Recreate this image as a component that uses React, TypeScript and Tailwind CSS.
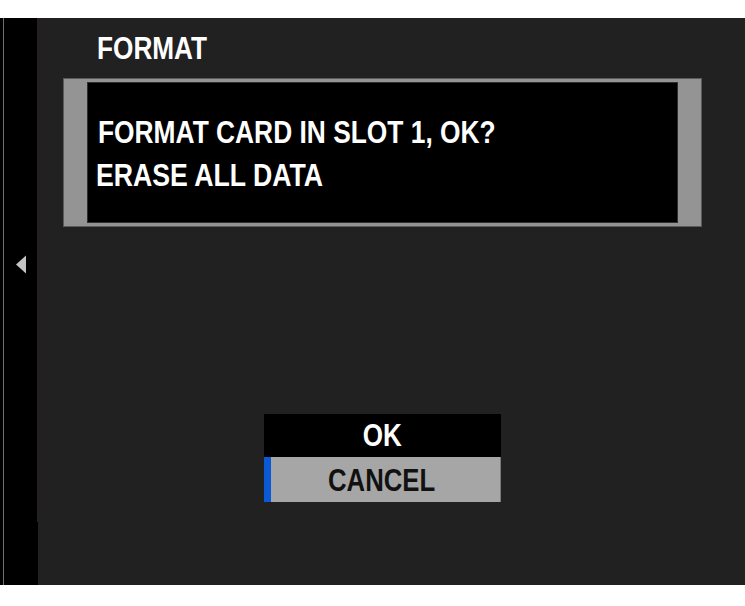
import React from 'react';

const font = { fontFamily: '"Liberation Sans", Arial, sans-serif' };

const Squeezed = ({ children, className = '' }: { children: React.ReactNode, className?: string }) => (
    <span className={`inline-block whitespace-nowrap ${className}`}>{children}</span>
);

const LeftStrip = () => (
    <div className="w-[38px] h-full bg-black flex shrink-0">
        <div className="w-[3px]" />
        <div className="w-px h-full bg-[#6e6e6e]" />
        <div className="flex-1 pt-[237px] pl-[12px]">
            <svg width="11" height="19" viewBox="0 0 11 19">
                <polygon points="0,9.5 10,0.5 10,18.5" fill="#c4c4c4" />
            </svg>
        </div>
        <div className="w-px h-[504px] bg-[#2b1f1f]" />
    </div>
);

export default function App() {
    return (
        <div className="bg-white h-[606px] pt-[18px] font-bold" style={font}>
            <div className="flex h-[567px]">
                <LeftStrip />

                <div className="flex-1 bg-[#212121] flex flex-col">
                    {/* Title */}
                    <div className="pt-[16px] pl-[59px] text-[31px] leading-[30px] text-white">
                        <Squeezed className="origin-left scale-x-[0.845]">FORMAT</Squeezed>
                    </div>

                    {/* Message box */}
                    <div className="mt-[14px] ml-[25px] w-[639px] h-[149px] bg-[#949494] border border-[#5a5a5a] px-[23px] py-[3px]">
                        <div className="h-full bg-black border border-[#2f2f2f] pt-[28px] pl-[8px] text-[31px] leading-[43px] text-white">
                            <div className="pl-[2px]"><Squeezed className="origin-left scale-x-[0.85]">FORMAT CARD IN SLOT 1, OK?</Squeezed></div>
                            <div><Squeezed className="origin-left scale-x-[0.86]">ERASE ALL DATA</Squeezed></div>
                        </div>
                    </div>

                    {/* Choices */}
                    <div className="mt-[187px] ml-[226px] w-[237px] text-[31px] text-center">
                        <div className="h-[43px] leading-[44px] bg-black text-white">
                            <Squeezed className="origin-center scale-x-[0.84]">OK</Squeezed>
                        </div>
                        <div className="relative h-[45px] leading-[47px] bg-[#a6a6a6] text-[#111] border-r border-[#7a7a7a]">
                            <div className="absolute left-0 top-0 h-full w-[7px] bg-[#0a5ad8]" />
                            <Squeezed className="origin-center scale-x-[0.83]">CANCEL</Squeezed>
                        </div>
                    </div>
                </div>
            </div>
        </div>
    );
}
